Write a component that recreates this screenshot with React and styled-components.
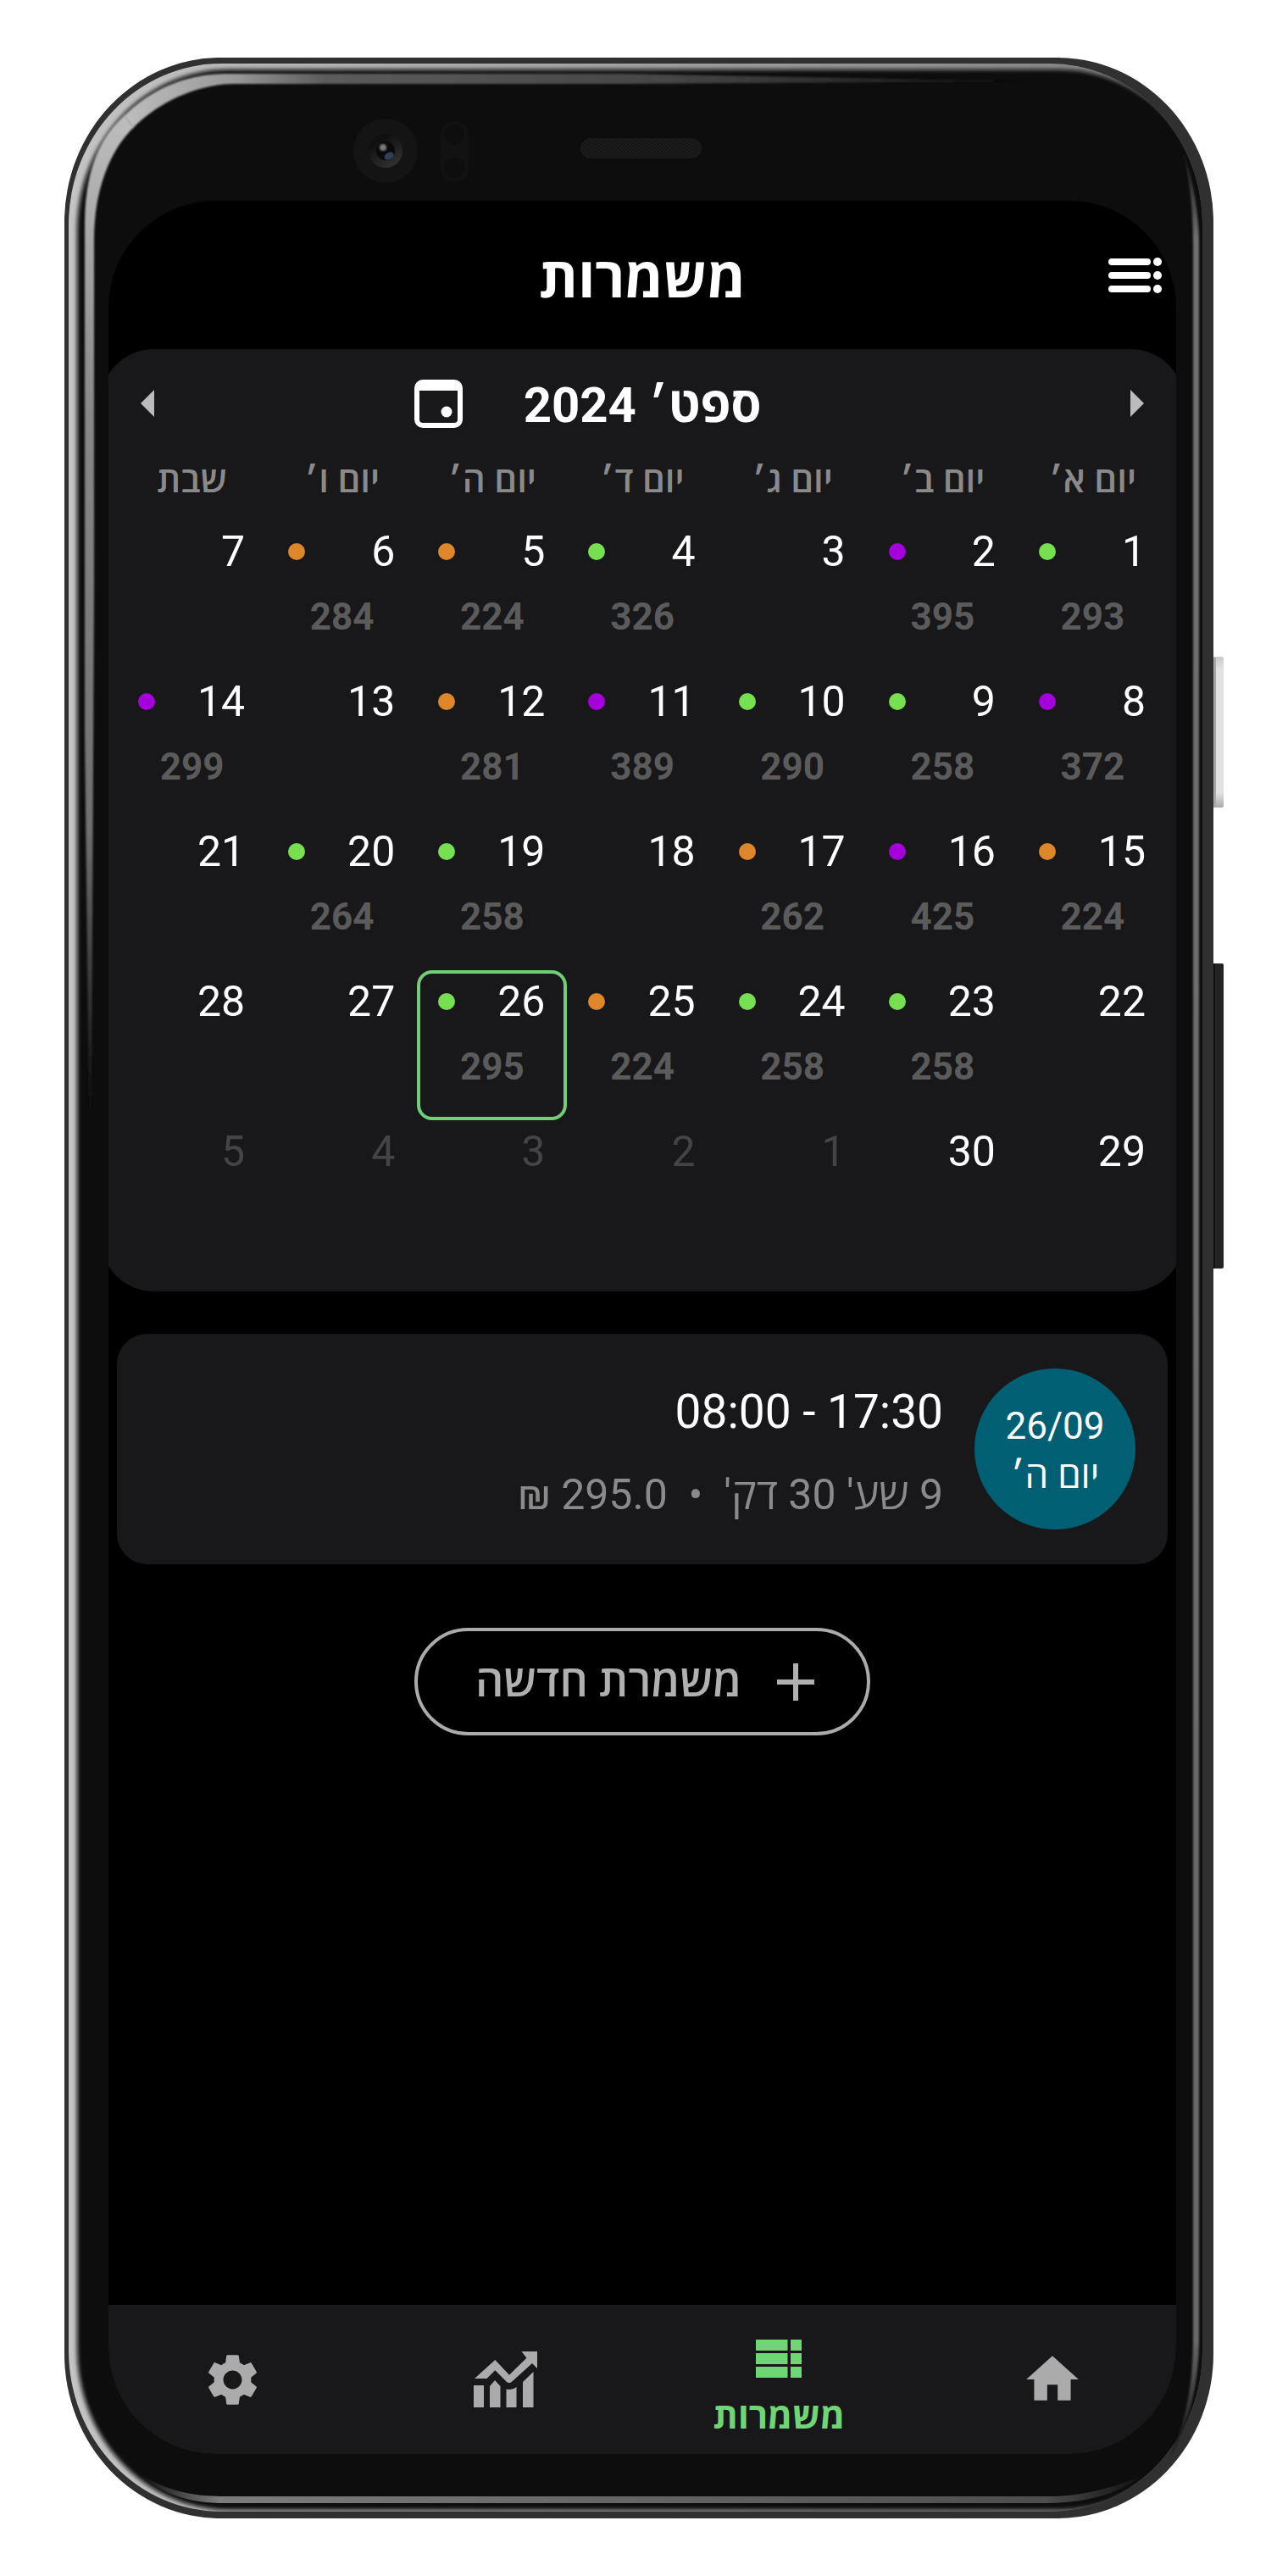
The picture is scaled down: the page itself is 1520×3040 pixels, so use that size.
import React, { useState } from "react";
import styled, { createGlobalStyle } from "styled-components";
import { MdHome, MdSettings } from "react-icons/md";

const GlobalStyle = createGlobalStyle`
  *, *::before, *::after { box-sizing: border-box; }
  body {
    margin: 0;
    background: #fff;
    font-family: Roboto, "Open Sans", "Noto Sans", sans-serif;
  }
  button { font-family: inherit; }
`;

const colors = {
  panel: "#18181a",
  green: "#70d575",
  grey: "#ababab",
  text: "#8a8a8a",
};

const dotColors = { g: "#76e050", o: "#de862a", p: "#a400dc" };

const Page = styled.div`
  min-height: 100vh;
  padding: 68px 88px 68px 76px;
  display: flex;
`;

const Device = styled.div`
  position: relative;
  flex: 1;
  min-height: calc(100vh - 136px);
  padding: 169px 44px 76px 52px;
  display: flex;
`;

const FrameArt = styled.svg`
  position: absolute;
  inset: 0;
  width: 100%;
  height: 100%;
  overflow: visible;
`;

const Screen = styled.div`
  position: relative;
  flex: 1;
  min-width: 0;
  display: flex;
  flex-direction: column;
  background: #000;
  border-radius: 126px;
  overflow: hidden;
  color: #fff;
`;

const TopBar = styled.header`
  display: grid;
  grid-template-columns: 1fr auto 1fr;
  align-items: center;
  height: 175px;
  padding: 0 16px;
`;

const IconButton = styled.button`
  display: flex;
  padding: 0;
  border: 0;
  background: none;
  color: ${(p) => p.$color || "#fff"};
  justify-self: start;
  cursor: pointer;
`;

const Title = styled.h1`
  margin: 0;
  padding-top: 8px;
  font-size: 66px;
  line-height: 80px;
  font-weight: 700;
`;

const Main = styled.main`
  flex: 1;
  display: flex;
  flex-direction: column;
`;

const Calendar = styled.section`
  margin: 0 -10px;
  padding: 0 20px 25px;
  border-radius: 64px;
  background: ${colors.panel};
`;

const MonthBar = styled.div`
  display: grid;
  grid-template-columns: 1fr auto 1fr;
  align-items: center;
  height: 128px;
  padding: 0 28px;
`;

const MonthName = styled.h2`
  margin: 0;
  padding-top: 4px;
  font-size: 58px;
  line-height: 72px;
  font-weight: 700;
`;

const MonthTools = styled.div`
  display: flex;
  align-items: center;
  justify-content: space-between;
  padding-inline-start: 72px;
`;

const Month = styled.table`
  width: 100%;
  table-layout: fixed;
  border-collapse: collapse;
`;

const WeekDay = styled.th`
  height: 74px;
  padding: 0 0 20px;
  font-size: 42px;
  line-height: 54px;
  font-weight: 600;
  color: ${colors.text};
  white-space: nowrap;
`;

const DayCell = styled.td`
  padding: 0;
`;

const DayButton = styled.button`
  display: flex;
  flex-direction: column;
  gap: 12px;
  width: 100%;
  height: 177px;
  padding: 0;
  border: 0;
  border-radius: 18px;
  background: none;
  color: ${(p) => (p.$outside ? "#444446" : "#fff")};
  box-shadow: ${(p) => (p.$selected ? "inset 0 0 0 4px #72cd78" : "none")};
  cursor: pointer;
`;

const DayTop = styled.span`
  display: flex;
  align-items: center;
  justify-content: space-between;
  width: 100%;
  height: 74px;
  padding: 0 26px;
  padding-inline-end: 25px;
  font-size: 50px;
  line-height: 60px;
`;

const Dot = styled.span`
  width: 20px;
  height: 20px;
  border-radius: 50%;
  background: ${(p) => dotColors[p.$kind]};
`;

const Amount = styled.span`
  width: 100%;
  font-size: 44px;
  line-height: 56px;
  font-weight: 700;
  text-align: center;
  color: #5b5b5b;
`;

const ShiftCard = styled.article`
  display: flex;
  align-items: center;
  gap: 37px;
  margin: 50px 10px 0;
  padding: 41px 38px;
  border-radius: 36px;
  background: ${colors.panel};
`;

const DateBadge = styled.div`
  flex: none;
  display: flex;
  flex-direction: column;
  align-items: center;
  justify-content: center;
  width: 190px;
  height: 190px;
  padding-top: 4px;
  border-radius: 50%;
  background: #005f73;
  font-size: 44px;
  line-height: 58px;
`;

const ShiftText = styled.div`
  display: flex;
  flex-direction: column;
  gap: 18px;
  padding-top: 10px;
  white-space: pre;
`;

const ShiftHours = styled.div`
  font-size: 55px;
  line-height: 80px;
`;

const ShiftDetails = styled.div`
  font-size: 50px;
  line-height: 80px;
  color: ${colors.text};
`;

const NewShiftButton = styled.button`
  align-self: center;
  display: flex;
  align-items: center;
  gap: 42px;
  height: 127px;
  margin-top: 75px;
  padding: 0 62px 0 68px;
  border: 4px solid ${colors.grey};
  border-radius: 64px;
  background: none;
  color: #b0b0b0;
  font-size: 52px;
  line-height: 64px;
  font-weight: 600;
  cursor: pointer;
`;

const TabBar = styled.nav`
  display: flex;
  height: 176px;
  margin: 0 -15px;
  background: ${colors.panel};
`;

const Tab = styled.a`
  flex: 1;
  display: flex;
  flex-direction: column;
  align-items: center;
  justify-content: center;
  gap: 20px;
  padding-top: ${(p) => (p.$active ? "22px" : "0")};
  color: ${(p) => (p.$active ? colors.green : colors.grey)};
  font-size: 42px;
  line-height: 52px;
  font-weight: 700;
  text-decoration: none;
`;

function PhoneFrame() {
  return (
    <FrameArt viewBox="0 0 1356 2904" preserveAspectRatio="none" aria-hidden="true">
      <defs>
        <clipPath id="rimClip">
          <rect x="5" y="7" width="1338" height="2889" rx="180" ry="190" />
        </clipPath>
        <filter id="soft" x="-5%" y="-5%" width="110%" height="110%">
          <feGaussianBlur stdDeviation="2.4" />
        </filter>
        <filter id="edge" x="-50%" y="-5%" width="200%" height="110%">
          <feGaussianBlur stdDeviation="0.8" />
        </filter>
        <linearGradient id="rim" gradientUnits="userSpaceOnUse" x1="0" y1="0" x2="1343" y2="0">
          <stop offset="0" stopColor="#c4c4c4" />
          <stop offset="0.15" stopColor="#b8b8b8" />
          <stop offset="1" stopColor="#808080" />
        </linearGradient>
        <linearGradient id="topLight" gradientUnits="userSpaceOnUse" x1="70" y1="0" x2="1145" y2="0">
          <stop offset="0" stopColor="#bdbdbd" />
          <stop offset="0.12" stopColor="#999" />
          <stop offset="0.22" stopColor="#5c5c5c" />
          <stop offset="0.6" stopColor="#464646" />
          <stop offset="1" stopColor="#0d0d0d" />
        </linearGradient>
        <linearGradient id="leftLight" gradientUnits="userSpaceOnUse" x1="0" y1="70" x2="0" y2="1240">
          <stop offset="0" stopColor="#bdbdbd" />
          <stop offset="0.3" stopColor="#888" />
          <stop offset="0.72" stopColor="#707070" />
          <stop offset="1" stopColor="#0d0d0d" />
        </linearGradient>
        <linearGradient id="rightLight" gradientUnits="userSpaceOnUse" x1="0" y1="105" x2="0" y2="2830">
          <stop offset="0" stopColor="#0d0d0d" />
          <stop offset="0.04" stopColor="#707070" />
          <stop offset="0.95" stopColor="#6a6a6a" />
          <stop offset="1" stopColor="#0d0d0d" />
        </linearGradient>
        <linearGradient id="bottomLight" gradientUnits="userSpaceOnUse" x1="88" y1="0" x2="1275" y2="0">
          <stop offset="0" stopColor="#0d0d0d" />
          <stop offset="0.08" stopColor="#7c7c7c" />
          <stop offset="0.9" stopColor="#4e4e4e" />
          <stop offset="1" stopColor="#0d0d0d" />
        </linearGradient>
        <linearGradient id="lens" x1="0" y1="0" x2="0.6" y2="1">
          <stop offset="0.3" stopColor="#101010" />
          <stop offset="1" stopColor="#303030" />
        </linearGradient>
        <linearGradient id="power" x1="0" y1="0" x2="0" y2="1">
          <stop offset="0" stopColor="#c8c8c8" />
          <stop offset="0.08" stopColor="#e2e2e2" />
          <stop offset="0.9" stopColor="#e2e2e2" />
          <stop offset="1" stopColor="#aaa" />
        </linearGradient>
        <pattern id="mesh" width="4" height="4" patternUnits="userSpaceOnUse">
          <rect width="4" height="4" fill="#141414" />
          <rect width="2" height="2" fill="#1e1e1e" />
          <rect x="2" y="2" width="2" height="2" fill="#1e1e1e" />
        </pattern>
      </defs>

      <rect x="1350" y="707" width="18" height="178" rx="2" fill="url(#power)" />
      <rect x="1356" y="708" width="3" height="176" fill="#a8a8a8" />
      <rect x="1350" y="1069" width="18" height="360" rx="2" fill="#232323" />
      <rect x="1356" y="1069" width="2" height="360" fill="#111" />

      <rect width="1356" height="2904" rx="184" ry="194" fill="#303030" />
      <g clipPath="url(#rimClip)">
        <rect width="1356" height="2904" fill="url(#rim)" />
        <rect x="15" y="14" width="1338" height="2880" rx="178" ry="190" fill="#0d0d0d" filter="url(#soft)" />
      </g>

      <path
        d="M24 199C24 128 44 92 71 68L82 82C53 110 35 158 35 215V620L32 1240H29L24 800Z"
        fill="url(#leftLight)"
        filter="url(#edge)"
      />
      <path
        d="M70 69C104 35 146 19 191 19H660L1145 28L660 31H201C156 31 110 53 81 83Z"
        fill="url(#topLight)"
        filter="url(#edge)"
      />
      <path
        d="M1318 105C1332 140 1339 185 1339 220V2690C1339 2750 1326 2795 1304 2832C1324 2790 1332 2745 1332 2690V220C1332 180 1328 140 1318 105Z"
        fill="url(#rightLight)"
        filter="url(#edge)"
      />
      <path
        d="M88 2852C124 2872 150 2878 190 2878H1160C1200 2878 1240 2868 1275 2852C1240 2878 1200 2886 1160 2886H190C150 2886 120 2878 88 2852Z"
        fill="url(#bottomLight)"
      />

      <circle cx="379" cy="110" r="38" fill="#141414" />
      <circle cx="379" cy="110" r="20" fill="url(#lens)" />
      <circle cx="379" cy="110" r="11" fill="#0a0a0d" />
      <circle cx="376" cy="106" r="4" fill="#7c7c7c" filter="url(#edge)" />
      <ellipse cx="383" cy="116" rx="6" ry="4" fill="#333c58" transform="rotate(-30 383 116)" />
      <rect x="444" y="75" width="33" height="72" rx="16" fill="#121212" />
      <circle cx="460" cy="91" r="12" fill="#0e0e0e" />
      <circle cx="460" cy="130" r="12" fill="#0e0e0e" />
      <rect x="609" y="95" width="143" height="24" rx="12" fill="url(#mesh)" />
    </FrameArt>
  );
}

const MenuIcon = () => (
  <svg width="64" height="44" viewBox="0 0 64 44" fill="currentColor" aria-hidden="true">
    {[6, 22, 38].map((y) => (
      <g key={y}>
        <rect x="0" y={y - 4} width="50" height="8" rx="4" />
        <circle cx="58" cy={y} r="5" />
      </g>
    ))}
  </svg>
);

const ArrowIcon = ({ left }) => (
  <svg width="16" height="32" viewBox="0 0 16 32" fill="currentColor" aria-hidden="true">
    <path d={left ? "M16 0V32L0 16Z" : "M0 0V32L16 16Z"} />
  </svg>
);

const CalendarIcon = () => (
  <svg width="57" height="57" viewBox="0 0 57 57" fill="currentColor" aria-hidden="true">
    <path
      fillRule="evenodd"
      d="M10 0H47A10 10 0 0 1 57 10V47A10 10 0 0 1 47 57H10A10 10 0 0 1 0 47V10A10 10 0 0 1 10 0ZM6 13V47A4 4 0 0 0 10 51H47A4 4 0 0 0 51 47V13Z"
    />
    <circle cx="38" cy="38" r="6.5" />
  </svg>
);

const PlusIcon = () => (
  <svg width="44" height="44" viewBox="0 0 44 44" stroke="currentColor" strokeWidth="6" aria-hidden="true">
    <path d="M22 0V44M0 22H44" />
  </svg>
);

const ShiftsIcon = () => (
  <svg width="54" height="45" viewBox="0 0 54 45" fill="currentColor" aria-hidden="true">
    {[0, 16, 32].map((y) => (
      <g key={y}>
        <rect x="0" y={y} width="37.5" height="13" />
        <rect x="41" y={y} width="13" height="13" />
      </g>
    ))}
  </svg>
);

const ChartIcon = () => (
  <svg width="76" height="66" viewBox="0 0 76 66" fill="currentColor" aria-hidden="true">
    <path d="M0 40H12V66H0ZM19 41L25 34L31.5 41V66H19ZM38.5 44.5Q46 46 50.5 42V66H38.5ZM58 36L70.5 24V66H58Z" />
    <path d="M1 32L25.3 10L42 27.7L62.4 7.7L56.5 0H75V20L69 14L45.3 35.5Q42 38.5 39 36L25.3 22.3L15.5 32Z" />
  </svg>
);

const weekDays = ["יום א׳", "יום ב׳", "יום ג׳", "יום ד׳", "יום ה׳", "יום ו׳", "שבת"];

const shifts = {
  1: ["g", 293], 2: ["p", 395], 4: ["g", 326], 5: ["o", 224], 6: ["o", 284],
  8: ["p", 372], 9: ["g", 258], 10: ["g", 290], 11: ["p", 389], 12: ["o", 281], 14: ["p", 299],
  15: ["o", 224], 16: ["p", 425], 17: ["o", 262], 19: ["g", 258], 20: ["g", 264],
  23: ["g", 258], 24: ["g", 258], 25: ["o", 224], 26: ["g", 295],
};

const weeks = [0, 1, 2, 3, 4].map((week) =>
  [1, 2, 3, 4, 5, 6, 7].map((n) => {
    const index = week * 7 + n;
    const outside = index > 30;
    return { index, outside, day: outside ? index - 30 : index, shift: shifts[index] };
  })
);

const tabs = [
  { id: "home", name: "בית", icon: <MdHome size={74} /> },
  { id: "shifts", name: "משמרות", icon: <ShiftsIcon /> },
  { id: "stats", name: "סטטיסטיקה", icon: <ChartIcon /> },
  { id: "settings", name: "הגדרות", icon: <MdSettings size={73} /> },
];

export default function App() {
  const [selected, setSelected] = useState(26);

  return (
    <>
      <GlobalStyle />
      <Page>
        <Device>
          <PhoneFrame />
          <Screen dir="rtl" lang="he">
            <TopBar>
              <IconButton type="button" aria-label="תפריט">
                <MenuIcon />
              </IconButton>
              <Title>משמרות</Title>
            </TopBar>

            <Main>
              <Calendar>
                <MonthBar>
                  <IconButton type="button" $color="#bbb" aria-label="החודש הקודם">
                    <ArrowIcon />
                  </IconButton>
                  <MonthName>ספט׳ 2024</MonthName>
                  <MonthTools>
                    <IconButton type="button" aria-label="היום">
                      <CalendarIcon />
                    </IconButton>
                    <IconButton type="button" $color="#bbb" aria-label="החודש הבא">
                      <ArrowIcon left />
                    </IconButton>
                  </MonthTools>
                </MonthBar>

                <Month>
                  <thead>
                    <tr>
                      {weekDays.map((name) => (
                        <WeekDay key={name} scope="col">{name}</WeekDay>
                      ))}
                    </tr>
                  </thead>
                  <tbody>
                    {weeks.map((week) => (
                      <tr key={week[0].index}>
                        {week.map(({ index, day, outside, shift }) => (
                          <DayCell key={index}>
                            <DayButton
                              type="button"
                              $outside={outside}
                              $selected={index === selected}
                              aria-pressed={index === selected}
                              onClick={() => setSelected(index)}
                            >
                              <DayTop>
                                {day}
                                {shift && <Dot $kind={shift[0]} />}
                              </DayTop>
                              {shift && <Amount>{shift[1]}</Amount>}
                            </DayButton>
                          </DayCell>
                        ))}
                      </tr>
                    ))}
                  </tbody>
                </Month>
              </Calendar>

              <ShiftCard>
                <DateBadge>
                  <span>26/09</span>
                  <span>יום ה׳</span>
                </DateBadge>
                <ShiftText>
                  <ShiftHours>
                    <bdi dir="ltr">08:00 - 17:30</bdi>
                  </ShiftHours>
                  <ShiftDetails>{"9 שע' 30 דק'  •  295.0 ₪"}</ShiftDetails>
                </ShiftText>
              </ShiftCard>

              <NewShiftButton type="button">
                <PlusIcon />
                משמרת חדשה
              </NewShiftButton>
            </Main>

            <TabBar>
              {tabs.map(({ id, name, icon }) => {
                const active = id === "shifts";
                return (
                  <Tab key={id} href={"#" + id} $active={active} aria-label={name}>
                    {icon}
                    {active && <span>{name}</span>}
                  </Tab>
                );
              })}
            </TabBar>
          </Screen>
        </Device>
      </Page>
    </>
  );
}
